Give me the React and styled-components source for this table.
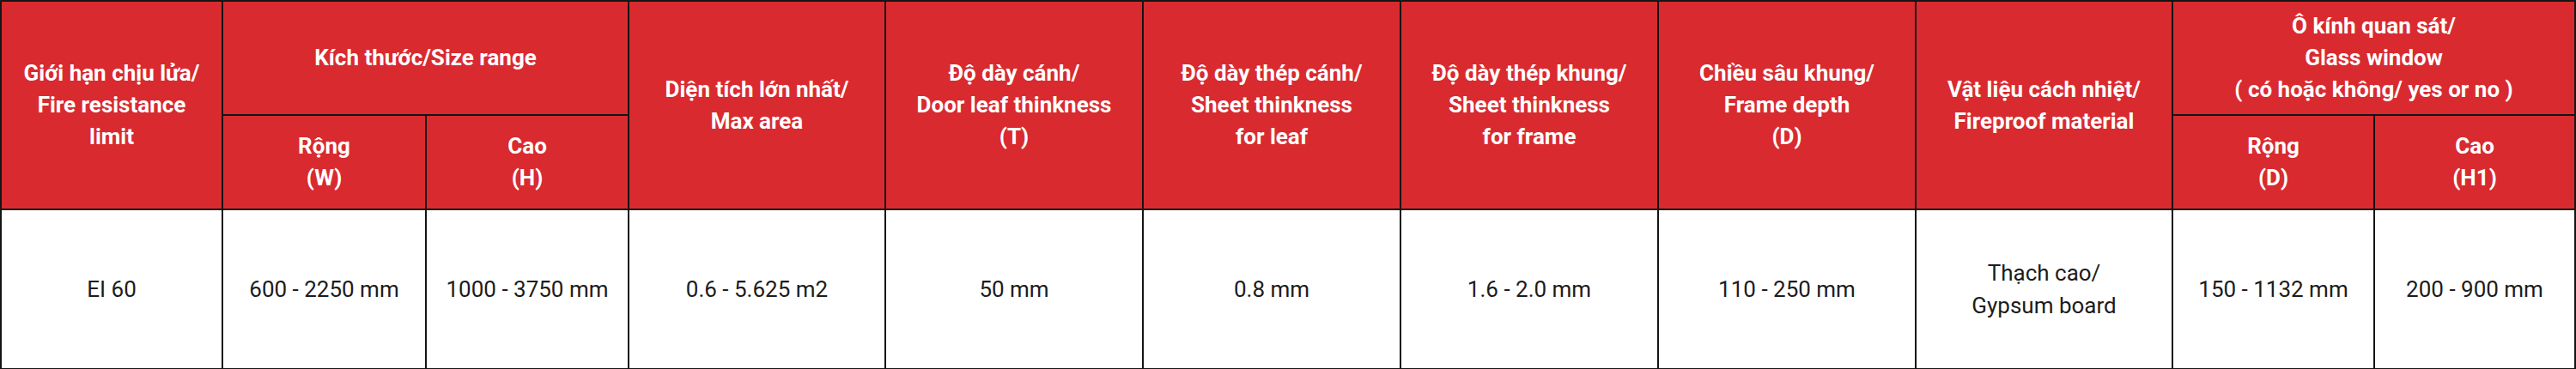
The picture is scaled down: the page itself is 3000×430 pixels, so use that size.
import React from 'react';
import styled, { createGlobalStyle } from 'styled-components';

// STYLES

const GlobalStyle = createGlobalStyle`
    html, body {
        margin: 0;
        padding: 0;
        background: #ffffff;
    }
    body {
        font-family: Roboto, "Noto Sans", "Liberation Sans", sans-serif;
    }
`;

const SpecTable = styled.table`
    width: 3000px;
    table-layout: fixed;
    border-collapse: collapse;
    font-family: Roboto, "Noto Sans", "Liberation Sans", sans-serif;
    font-size: 26px;
    line-height: 37px;
`;

const HeadCell = styled.th`
    height: ${p => p.$h || 'auto'};
    padding: 0 8px;
    background-color: #d92a30;
    color: #ffffff;
    font-weight: 700;
    text-align: center;
    vertical-align: middle;
    border: 2px solid #141414;
    box-sizing: border-box;
`;

const BodyCell = styled.td`
    height: 186px;
    padding: 0 8px;
    background-color: #ffffff;
    color: #1c1c1c;
    font-weight: 400;
    text-align: center;
    vertical-align: middle;
    border: 2px solid #141414;
    box-sizing: border-box;
    line-height: 38px;
`;

const columns = [258, 237, 236, 299, 300, 300, 300, 300, 299, 235, 234];

const bodyRow = [
    ['EI 60'],
    ['600 - 2250 mm'],
    ['1000 - 3750 mm'],
    ['0.6 - 5.625 m2'],
    ['50 mm'],
    ['0.8 mm'],
    ['1.6 - 2.0 mm'],
    ['110 - 250 mm'],
    ['Thạch cao/', 'Gypsum board'],
    ['150 - 1132 mm'],
    ['200 - 900 mm'],
];

const Lines = ({ items }) => items.map((t, i) => (
    <React.Fragment key={i}>
        {i > 0 && <br />}
        {t}
    </React.Fragment>
));

// COMPONENT

export default function App() {
    return (
        <>
            <GlobalStyle />
            <SpecTable>
                <colgroup>
                    {columns.map((w, i) => <col key={i} style={{ width: w }} />)}
                </colgroup>
                <thead>
                    <tr>
                        <HeadCell rowSpan={2}>
                            <Lines items={['Giới hạn chịu lửa/', 'Fire resistance', 'limit']} />
                        </HeadCell>
                        <HeadCell colSpan={2} $h="133px">Kích thước/Size range</HeadCell>
                        <HeadCell rowSpan={2}>
                            <Lines items={['Diện tích lớn nhất/', 'Max area']} />
                        </HeadCell>
                        <HeadCell rowSpan={2}>
                            <Lines items={['Độ dày cánh/', 'Door leaf thinkness', '(T)']} />
                        </HeadCell>
                        <HeadCell rowSpan={2}>
                            <Lines items={['Độ dày thép cánh/', 'Sheet thinkness', 'for leaf']} />
                        </HeadCell>
                        <HeadCell rowSpan={2}>
                            <Lines items={['Độ dày thép khung/', 'Sheet thinkness', 'for frame']} />
                        </HeadCell>
                        <HeadCell rowSpan={2}>
                            <Lines items={['Chiều sâu khung/', 'Frame depth', '(D)']} />
                        </HeadCell>
                        <HeadCell rowSpan={2}>
                            <Lines items={['Vật liệu cách nhiệt/', 'Fireproof material']} />
                        </HeadCell>
                        <HeadCell colSpan={2} $h="133px">
                            <Lines items={['Ô kính quan sát/', 'Glass window', '( có hoặc không/ yes or no )']} />
                        </HeadCell>
                    </tr>
                    <tr>
                        <HeadCell $h="110px"><Lines items={['Rộng', '(W)']} /></HeadCell>
                        <HeadCell $h="110px"><Lines items={['Cao', '(H)']} /></HeadCell>
                        <HeadCell $h="110px"><Lines items={['Rộng', '(D)']} /></HeadCell>
                        <HeadCell $h="110px"><Lines items={['Cao', '(H1)']} /></HeadCell>
                    </tr>
                </thead>
                <tbody>
                    <tr>
                        {bodyRow.map((cell, i) => (
                            <BodyCell key={i}><Lines items={cell} /></BodyCell>
                        ))}
                    </tr>
                </tbody>
            </SpecTable>
        </>
    );
}
